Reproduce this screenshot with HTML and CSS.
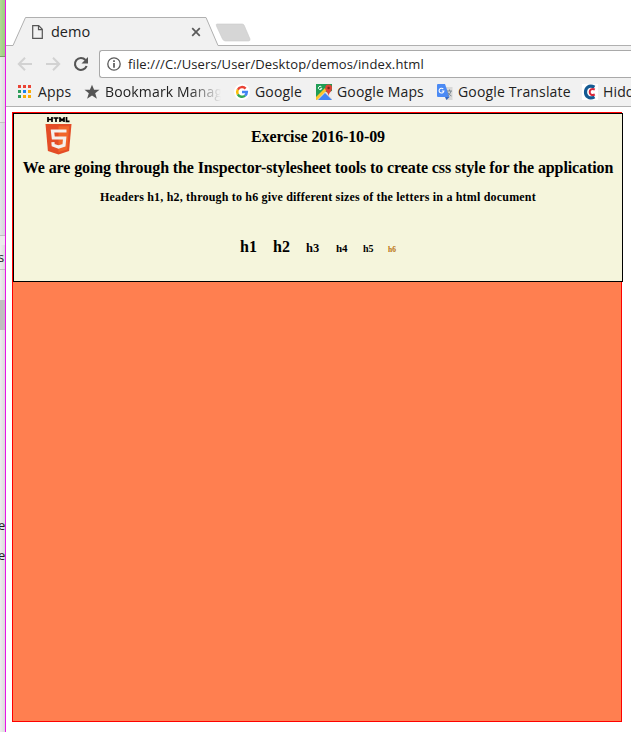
FILE: index.html
```html
<!DOCTYPE html>
<html lang="en">
<head>
<meta charset="utf-8">
<title>demo</title>
<link rel="stylesheet" href="styles.css">
</head>
<body>
<div class="desktop">
  <aside class="behind">
    <div class="green"></div>
    <div class="pane upper"></div>
    <div class="pane rule"></div>
    <div class="pane label"><span>s</span></div>
    <div class="pane gap"></div>
    <div class="pane dark"></div>
    <div class="pane lower"><span>e</span><span>e</span></div>
  </aside>
  <main class="window">
    <div class="tabs">
      <svg class="tabshape" width="625" height="46" viewBox="6 0 625 46">
        <path d="M6 45.5h7L25.500 17.500H206L218 45.500H631V46H6z" fill="#f1f1f1"/>
        <path d="M6 45.500h7L25.500 17.500H206L218 45.500H631" fill="none" stroke="#b0b0b0"/>
        <path d="M217 24h25q1.500 0 2 1l6 14q.5 2-1.500 2h-23q-2 0-3-2l-6-13q-.8-2 .5-2z" fill="#d6d6d6" stroke="#c9c9c9" stroke-width=".6"/>
      </svg>
      <div class="tab">
        <svg width="11" height="14" viewBox="0 0 11 14"><path d="M.7.700h6l3.600 3.600v9H.7zM6.500.700v4h4" fill="none" stroke="#555" stroke-width="1.200"/></svg>
        <span class="title">demo</span>
        <svg width="10" height="10" viewBox="0 0 10 10"><path d="M1.200 1.200l7.600 7.600M8.800 1.200L1.200 8.800" stroke="#5a5a5a" stroke-width="1.700"/></svg>
      </div>
    </div>
    <div class="toolbar">
      <svg class="nav" width="86" height="20" viewBox="14 54 86 20">
        <path d="M32 64H19m6-6.300L18.800 64l6.200 6.300M46 64h13m-6-6.300l6.200 6.300-6.200 6.300" fill="none" stroke="#d2d2d2" stroke-width="2"/>
        <path d="M85.500 60a6 6 0 1 0 1.100 6" fill="none" stroke="#555" stroke-width="2.100"/>
        <path d="M88 57v6.500h-6.500z" fill="#555"/>
      </svg>
      <div class="address">
        <svg width="14" height="14" viewBox="0 0 14 14"><circle cx="7" cy="7" r="6.200" fill="none" stroke="#5a5a5a" stroke-width="1.300"/><path d="M7 6v4.800M7 3.200v1.700" stroke="#5a5a5a" stroke-width="1.700"/></svg>
        <span class="url">file:///C:/Users/User/Desktop/demos/index.html</span>
      </div>
    </div>
    <nav class="bookmarks">
      <a class="bm apps"><svg width="14" height="14" viewBox="0 0 14 14"><path d="M0 0h3v3H0zM5 0h3v3H5zM10 0h3v3h-3z" fill="#ea4335"/><path d="M0 5h3v3H0zM0 10h3v3H0z" fill="#2e9e5b"/><path d="M5 5h3v3H5z" fill="#1a82f0"/><path d="M10 5h3v3h-3zM5 10h3v3H5zM10 10h3v3h-3z" fill="#f9ab05"/></svg><span>Apps</span></a>
      <a class="bm manager"><svg width="16" height="16" viewBox="0 0 16 16"><path d="M8 .8l2.100 5h5.400l-4.300 3.500 1.700 5.500L8 11.500l-4.900 3.300 1.700-5.500L.5 5.800h5.400z" fill="#555"/></svg><span>Bookmark Manager</span></a>
      <a class="bm google"><svg width="16" height="16" viewBox="0 0 16 16"><circle cx="8" cy="8" r="8" fill="#fff"/><g fill="none" stroke-width="2.500"><path d="M11.600 4.600A4.800 4.800 0 0 0 3.800 5.700" stroke="#ea4335"/><path d="M3.800 5.700a4.800 4.800 0 0 0 0 4.600" stroke="#fbbc05"/><path d="M3.800 10.300a4.800 4.800 0 0 0 7.300 1.300" stroke="#34a853"/><path d="M11.100 11.600A4.800 4.800 0 0 0 12.800 8H8" stroke="#4285f4"/></g></svg><span>Google</span></a>
      <a class="bm maps"><svg width="16" height="16" viewBox="0 0 16 16"><path d="M0 0h16v16H0z" fill="#1f9d55"/><path d="M0 16L9 7l7 7v2z" fill="#d8d8d8"/><path d="M2 16l7-7 7 7z" fill="#4285f4"/><path d="M9.500 8.500L16 15V7z" fill="#eee"/><path d="M0 13L9 4l2 2L1 16H0z" fill="#fbc52d"/><path d="M12.500 12c-.3-3.500-3.300-4.500-3.300-8a3.400 3.400 0 0 1 6.800 0c0 3.500-3 4.500-3.500 8z" fill="#dc4437"/><circle cx="12.600" cy="4" r="1.200" fill="#7b231d"/><path d="M5.400 2.800a1.700 1.700 0 1 0 .4 1.600H4.300" fill="none" stroke="#fff"/></svg><span>Google Maps</span></a>
      <a class="bm translate"><svg width="16" height="16" viewBox="0 0 16 16"><path d="M5 3h10.500v13H9z" fill="#d8d8d8"/><path d="M1 0h7l4.500 13H1q-1 0-1-1V1q0-1 1-1z" fill="#4b8af4"/><path d="M8 13h4.500L9.500 16z" fill="#3467c0"/><path d="M6.300 5a2.400 2.400 0 1 0 .6 2H4.800" fill="none" stroke="#fff" stroke-width="1.100"/><path d="M10 7h5M12.500 5.500V7m1.500 0q-.5 3-3.500 5M11 8.500q1 2.500 3.500 3.500" fill="none" stroke="#7b8790"/></svg><span>Google Translate</span></a>
      <a class="bm hidden"><svg width="16" height="16" viewBox="0 0 16 16"><path d="M0 0h16v16H0z" fill="#fff"/><path d="M12.500 3.200C7 .2 3.500 4 3.500 8s3.500 7.800 9 4.800" fill="none" stroke="#145a92" stroke-width="3.200"/><path d="M12.800 5.500C9.500 4 7.700 6 7.700 8s1.800 4 5.100 2.500" fill="none" stroke="#d8293c" stroke-width="2"/></svg><span>Hidden</span></a>
    </nav>
    <section class="viewport">
      <div class="page">
        <header class="intro">
          <svg class="logo" width="27" height="38" viewBox="0 0 27 38">
            <path d="M3 0v5M7 0v5M3 2.500h4M8.500 1h5M11 1v4M15 5V1l2 2.500L19 1v4M21.500 0v4.300h3" fill="none" stroke="#000" stroke-width="1.700"/>
            <path d="M.5 7h26l-2.400 27L13.500 37.500 2.900 34z" fill="#e44d26"/><path d="M13.500 9.200h10.700l-2 23.200-8.700 2.700z" fill="#f16529"/>
            <path d="M21.500 14H7.500l.8 7h11.400l-.7 7.200-5.500 1.900-5.300-1.900-.3-3" fill="none" stroke="#f4f0ec" stroke-width="3.200"/>
          </svg>
          <h1>Exercise 2016-10-09</h1>
          <h2>We are going through the Inspector-stylesheet tools to create css style for the application</h2>
          <h3>Headers h1, h2, through to h6 give different sizes of the letters in a html document</h3>
          <div class="sizes"><b class="s1">h1</b><b class="s2">h2</b><b class="s3">h3</b><b class="s4">h4</b><b class="s5">h5</b><b class="s6">h6</b></div>
        </header>
      </div>
    </section>
  </main>
</div>
</body>
</html>
```
FILE: styles.css
```css
* { box-sizing: border-box; }
body { margin: 0; overflow: hidden; font-family: "Open Sans", sans-serif; color: #222; }
svg { display: block; flex: none; }
.desktop { display: flex; width: 631px; height: 732px; overflow: hidden; background: #fff; }
.behind { width: 6px; flex: none; border-right: 1px solid #e815e8; overflow: hidden; background: linear-gradient(90deg, #eee, #dcdcdc); font-size: 13px; }
.green { height: 57px; background: linear-gradient(90deg, #b0da94, #9ccb80); border-bottom: 1px solid #7d9a6b; }
.upper { height: 66px; border-bottom: 1px solid #c4c4c4; }
.rule { height: 113px; background: linear-gradient(90deg, #e4e5e9, #d5d6da); border-bottom: 1px solid #c0c0c0; }
.label { height: 34px; border-bottom: 1px solid #c0c0c0; border-top: 9px solid #ececec; line-height: 24px; }
.label span, .lower span { display: block; margin-left: -2px; }
.gap { height: 30px; }
.dark { height: 30px; background: #c0c0c0; }
.lower { padding-top: 180px; line-height: 30px; }
.window { flex: 1; min-width: 0; }
.tabs { height: 46px; position: relative; }
.tabshape { position: absolute; left: 0; top: 0; }
.tab { position: relative; display: flex; align-items: center; width: 196px; height: 29px; padding-left: 26px; top: 17px; }
.title { width: 133px; margin-left: 8px; font-size: 14.500px; margin-right: 7px; }
.toolbar { height: 34px; background: #f1f1f1; padding: 4px 0 2px 8px; display: flex; align-items: center; }
.nav { margin-right: -1px; }
.address { height: 28px; flex: 1; display: flex; align-items: center; background: #fff; border: 1px solid #a9a9a9; border-right: 0; border-radius: 3px 0 0 3px; padding-left: 7px; }
.url { font-size: 13px; margin-left: 7px; white-space: nowrap; letter-spacing: .12px; }
.bookmarks { height: 27px; background: #f1f1f1; border-bottom: 1px solid #b2b2b2; display: flex; align-items: center; overflow: hidden; font-size: 14px; padding: 0 0 3px 12px; }
.bm { display: flex; align-items: center; flex: none; white-space: nowrap; overflow: hidden; height: 24px; }
.bm span { margin-left: 5px; letter-spacing: .15px; }
.apps { width: 66px; }
.bm.apps span { margin-left: 6px; }
.manager { width: 137px; margin-right: 13px; -webkit-mask-image: linear-gradient(90deg, #000 105px, transparent 137px); mask-image: linear-gradient(90deg, #000 105px, transparent 137px); }
.google { width: 82px; }
.maps { width: 121px; }
.translate { width: 145px; }
.viewport { height: 625px; background: #fff; padding: 5px 0 0 6px; }
.page { width: 610px; height: 610px; border: 1px solid #f00; background: coral; }
.intro { position: relative; width: 610px; height: 169px; border: 1px solid #000; background: beige; color: #000; text-align: center; font-family: "Liberation Serif", serif; padding-top: 13px; }
.logo { position: absolute; left: 31px; top: 3px; }
h1, h2, h3 { margin: 0; white-space: nowrap; }
h1, h2 { font-size: 16px; line-height: 20px; letter-spacing: -.11px; }
h2 { margin-top: 11px; }
h3 { font-size: 12px; line-height: 16px; margin-top: 11px; letter-spacing: .19px; }
.sizes { display: flex; align-items: baseline; height: 20px; line-height: 20px; margin: 32px 0 0 226px; text-align: left; }
.s1 { font-size: 16px; width: 33px; }
.s2 { font-size: 16px; width: 33px; }
.s3 { font-size: 12.500px; width: 30px; }
.s4 { font-size: 11px; width: 27px; }
.s5 { font-size: 10px; width: 25px; }
.s6 { font-size: 7.500px; color: #b8720c; }
```
